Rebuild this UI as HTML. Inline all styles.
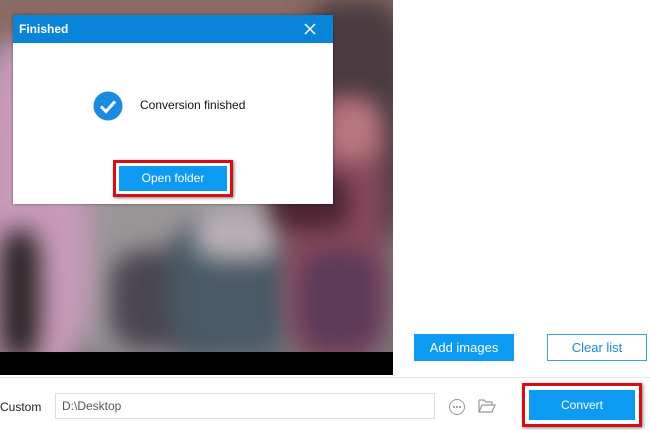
<!DOCTYPE html>
<html><head><meta charset="utf-8"><style>
*{margin:0;padding:0;box-sizing:border-box}
body{width:650px;height:430px;overflow:hidden;background:#fff;font-family:"Liberation Sans",sans-serif;position:relative}
.a{position:absolute}
.photo{left:0;top:0;width:393px;height:375px;background:#000;overflow:hidden}
.pi{left:0;top:0;width:393px;height:352px;overflow:hidden;background:#7a7478}
.b{position:absolute;filter:blur(12px);border-radius:30%}
</style></head><body>
<div class="a photo">
 <div class="a pi">
  <div class="b" style="left:-20px;top:-20px;width:440px;height:70px;background:#8a6a62"></div>
  <div class="b" style="left:300px;top:0;width:110px;height:240px;background:#4a3c40"></div>
  <div class="b" style="left:60px;top:180px;width:220px;height:180px;background:#9a9698"></div>
  <div class="b" style="left:110px;top:250px;width:110px;height:100px;background:#4a4650"></div>
  <div class="b" style="left:-20px;top:40px;width:110px;height:330px;background:#c89ab8"></div>
  <div class="b" style="left:0px;top:230px;width:40px;height:130px;background:#2a2426"></div>
  <div class="b" style="left:170px;top:220px;width:120px;height:140px;background:#4a5a66"></div>
  <div class="b" style="left:195px;top:205px;width:85px;height:55px;background:#b8b0b4"></div>
  <div class="b" style="left:285px;top:100px;width:100px;height:260px;background:#8a4a5e"></div>
  <div class="b" style="left:325px;top:100px;width:55px;height:60px;background:#b87880"></div>
  <div class="b" style="left:300px;top:250px;width:80px;height:100px;background:#5c3a58"></div>
  <div class="b" style="left:270px;top:175px;width:80px;height:55px;background:#4a2430"></div>
 </div>
</div>
<!-- dialog -->
<div class="a" style="left:13px;top:15px;width:320px;height:189px;background:#fff;box-shadow:0 0 3px rgba(0,0,0,.4)">
 <div class="a" style="left:0;top:0;width:320px;height:28px;background:#0a84d8;color:#fff;font-weight:bold;font-size:12px;line-height:28px;padding-left:6px">Finished</div>
 <svg class="a" style="left:291px;top:8px" width="12" height="12"><path d="M1 1L11 11M11 1L1 11" stroke="#fff" stroke-width="1.5"/></svg>
 <svg class="a" style="left:80px;top:76px" width="30" height="30"><circle cx="15" cy="15" r="14.5" fill="#1a8be0"/><path d="M8 15.5l5 5 9-10" stroke="#fff" stroke-width="3" fill="none"/></svg>
 <div class="a" style="left:127px;top:83px;font-size:12px;color:#111">Conversion finished</div>
 <div class="a" style="left:100px;top:145px;width:120px;height:37px;border:3px solid #d40e16;box-shadow:1px 1px 3px rgba(0,0,0,.5)"></div>
 <div class="a" style="left:106px;top:151px;width:108px;height:25px;background:#0d9af2;color:#fff;font-size:12px;text-align:center;line-height:25px">Open folder</div>
</div>
<!-- right buttons -->
<div class="a" style="left:414px;top:334px;width:100px;height:27px;background:#0d9af2;color:#fff;font-size:13px;text-align:center;line-height:27px">Add images</div>
<div class="a" style="left:547px;top:334px;width:100px;height:27px;border:1px solid #3aa0e0;color:#1a8ad8;font-size:13px;text-align:center;line-height:25px">Clear list</div>
<div class="a" style="left:0;top:377px;width:650px;height:1px;background:#e8e8e8"></div>
<div class="a" style="left:0;top:400px;font-size:12px;color:#222">Custom</div>
<div class="a" style="left:55px;top:393px;width:380px;height:26px;border:1px solid #ddd;font-size:12px;color:#555;line-height:24px;padding-left:6px">D:\Desktop</div>
<svg class="a" style="left:448px;top:398px" width="18" height="18"><circle cx="9" cy="9" r="7.5" fill="none" stroke="#999"/><circle cx="6" cy="9" r="1" fill="#888"/><circle cx="9" cy="9" r="1" fill="#888"/><circle cx="12" cy="9" r="1" fill="#888"/></svg>
<svg class="a" style="left:477px;top:397px" width="20" height="18"><path d="M2 3h5l2 2h6v3M2 3v12h13l3-7H5L2 15" fill="none" stroke="#999" stroke-width="1.2"/></svg>
<div class="a" style="left:522px;top:383px;width:120px;height:44px;border:3px solid #d40e16;box-shadow:1px 1px 3px rgba(0,0,0,.5)"></div>
<div class="a" style="left:529px;top:390px;width:106px;height:30px;background:#0d9af2;color:#fff;font-size:12px;text-align:center;line-height:30px">Convert</div>
</body></html>
